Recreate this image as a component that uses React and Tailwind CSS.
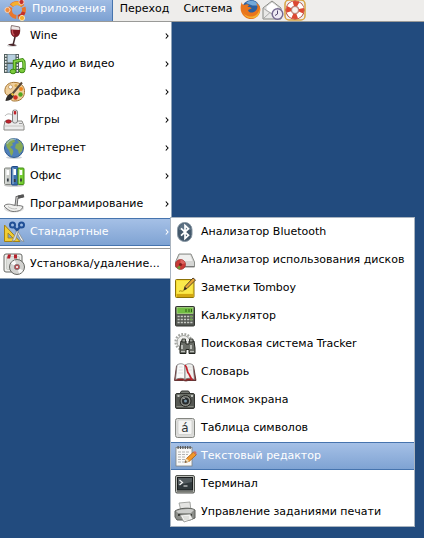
import React from "react";

function Svg({ children }) {
  return (
    <svg viewBox="0 0 24 24" className="h-6 w-6 shrink-0" fill="none" aria-hidden="true">
      {children}
    </svg>
  );
}

function Ubuntu() {
  return (
    <Svg>
      <circle cx="13" cy="10" r="7" stroke="#e8762c" strokeWidth="4" strokeDasharray="13.2 1.46" strokeDashoffset="3" />
      <path d="M8 5.300a7 7 0 0 1 10 0" stroke="#f5b02e" strokeWidth="3.500" />
      <path d="M19.700 12a7 7 0 0 1-5 4.800" stroke="#c4302b" strokeWidth="3.500" />
      <circle cx="3.500" cy="10" r="2.600" fill="#f08a3c" stroke="#f4d2b8" />
      <circle cx="17.500" cy="2" r="2.600" fill="#c4302b" stroke="#f4c9b8" />
      <circle cx="18" cy="18" r="2.600" fill="#f5b02e" stroke="#f4e2b8" />
    </Svg>
  );
}

function Wine() {
  return (
    <Svg>
      <ellipse cx="10" cy="21.500" rx="5" ry="1.200" fill="#d0d0d0" />
      <path d="M9.500 1.500 17.500 3c1 5-.500 9.500-4.300 10C9 12.500 8 7 9.500 1.500Z" fill="#eee8e8" stroke="#6b5555" strokeWidth=".8" />
      <path d="M9 5.500 18 6c.200 4-1.500 7-4.700 6.900C9.500 12.500 8.500 9.500 9 5.500Z" fill="#7d1821" />
      <path d="M10.500 6.200c-.300 2 .2 4 1.700 5.200" stroke="#c9575e" strokeWidth="1.200" />
      <path d="m13 13-1.800 7.500" stroke="#40282b" strokeWidth="1.500" />
      <path d="M6 20.500c2-1.200 6-1.200 8.500.800-2.500 1-6.500.700-8.500-.800Z" fill="#4b2529" />
    </Svg>
  );
}

function Media() {
  return (
    <Svg>
      <rect x="2" y="2" width="15" height="19" fill="#52605f" />
      <rect x="5.500" y="2.500" width="8" height="8" fill="#b7cfdf" />
      <rect x="5.500" y="12" width="8" height="8.500" fill="#8fb2cc" />
      <path d="M3.800 3v17.500M15.300 3v17.500" stroke="#f2f2f2" strokeWidth="1.500" strokeDasharray="1.700 1.300" />
      <path d="M12.500 18.500V9.500l8-1.700c1.500 1 1.500 2 1.500 4v6" stroke="#3c8a12" strokeWidth="3.400" />
      <path d="M12.500 18.500V9.500l8-1.700c1.500 1 1.500 2 1.500 4v6" stroke="#8bd548" strokeWidth="1.600" />
      <ellipse cx="11" cy="19.500" rx="2.800" ry="2.300" fill="#7ccb3c" stroke="#3c8a12" />
      <ellipse cx="20" cy="18.500" rx="2.800" ry="2.300" fill="#7ccb3c" stroke="#3c8a12" />
    </Svg>
  );
}

function Graphics() {
  return (
    <Svg>
      <path d="M3 12C2 5 8 1.500 14 2.500c6 .5 9 5 8.500 10-.500 6-5 9-11 8.500-4-.500-2-4-4-5S3.500 15 3 12Z" fill="#efcf9b" stroke="#a67634" />
      <circle cx="8.500" cy="7" r="2" fill="#fff" stroke="#a67634" strokeWidth=".6" />
      <circle cx="14" cy="5.500" r="1.600" fill="#d8a84d" />
      <circle cx="19" cy="9" r="2" fill="#f0861e" />
      <circle cx="18.500" cy="14.500" r="2.200" fill="#52a51f" />
      <circle cx="13.500" cy="17.500" r="2.200" fill="#cf2f20" />
      <path d="m20 2.500-11 13" stroke="#5a4a3a" strokeWidth="2" />
      <path d="m10 13 2 2c-1 4-4 5.500-8.500 6 .500-4 2.500-7 6.500-8Z" fill="#302d2b" />
      <path d="m9.500 13.500 2 1.800" stroke="#e8c13c" strokeWidth="2" />
    </Svg>
  );
}

function Games() {
  return (
    <Svg>
      <path d="M3 8c2-3 6-3 9 1" stroke="#b8b8b8" />
      <path d="M3 13h17l2 5v4H2v-4Z" fill="#ebebeb" stroke="#8a8a86" />
      <path d="M2.500 18h19" stroke="#c4c4c0" />
      <rect x="10.500" y="2" width="5" height="13" rx="2" fill="#e3e3e3" stroke="#858585" />
      <rect x="11.800" y="3" width="2.400" height="3.500" rx=".8" fill="#c1242c" />
      <ellipse cx="6.500" cy="13.500" rx="2.700" ry="1.700" fill="#c1242c" stroke="#7e151b" strokeWidth=".7" />
      <path d="M17 15.500h3" stroke="#999" />
    </Svg>
  );
}

function Globe() {
  return (
    <Svg>
      <ellipse cx="12" cy="21.500" rx="8" ry="1.500" fill="#ccd2d9" />
      <circle cx="12" cy="12" r="9.500" fill="#4f80ba" stroke="#345e8f" />
      <path d="M4 7c3-4 6-4.500 8-4l1 3-3 1 1 2-3 2 3 3c1 3-1 4-1 6-2-1-2-4-3-6-2-2-3-4-3-7Z" fill="#86a956" />
      <path d="m15 4 4 2 2 4-1 5-3 3-1-4-3-2 1-4 3-1Z" fill="#86a956" />
      <path d="M5 8c2-4 6-5 9-5" stroke="#b1cbe6" strokeOpacity=".6" strokeWidth="1.500" />
    </Svg>
  );
}

function Office() {
  return (
    <Svg>
      <ellipse cx="12" cy="21.500" rx="10" ry="1.300" fill="#c5c5c5" />
      <rect x="2.500" y="4" width="7" height="16.500" rx="1" fill="#c9ccc8" stroke="#80847e" />
      <rect x="9.500" y="2.500" width="6.500" height="18.500" rx="1" fill="#3c71ae" stroke="#204a87" />
      <rect x="16" y="4" width="6" height="16.500" rx="1" fill="#76cd32" stroke="#438d14" />
      <path d="M5.800 6v5M12.700 5v6M19 6v5" stroke="#fff" strokeWidth="2.600" />
      <path d="M5.800 14.500v3M12.700 15v3M19 14.500v3" stroke="#333a42" strokeWidth="1.800" />
      <path d="M4 5v14.500M11 4v16M17.300 5v14.500" stroke="#fff" strokeOpacity=".5" />
    </Svg>
  );
}

function Programming() {
  return (
    <Svg>
      <ellipse cx="12" cy="16.500" rx="10" ry="4" fill="#ddd" />
      <path d="M2 14c2-2.500 6-2 9-1 4 1 7 0 10 1.500-1 4-5 5-10 5-3 0-7-3-9-5.500Z" fill="#f0f0ee" stroke="#777" />
      <path d="m14 14 1-8.500 6-1.500" stroke="#666" strokeWidth="3" />
      <path d="m14 14 1-8.500 6-1.500" stroke="#c9c9c7" strokeWidth="1.200" />
      <path d="m16 5 6-1.300" stroke="#555" strokeWidth="3" />
      <path d="M6 14.500c2 2 6 3 9 2" stroke="#bdbdbb" />
    </Svg>
  );
}

function Accessories() {
  return (
    <Svg>
      <path d="M2.500 5v16.500H18Z" fill="#f1cd35" stroke="#a58313" />
      <path d="M6 13v5h5Z" fill="#7ea0cd" stroke="#a58313" strokeWidth=".8" />
      <path d="m13 9 2 1 7 11.500-3-1Z" fill="#f3f3f1" stroke="#80837e" strokeWidth=".7" />
      <path d="m17 9-2 1-5 11.500 3.500-1.500Z" fill="#dededb" stroke="#80837e" strokeWidth=".7" />
      <circle cx="10.500" cy="5" r="2.500" stroke="#204f96" strokeWidth="2" />
      <circle cx="19.500" cy="5" r="2.500" stroke="#204f96" strokeWidth="2" />
      <path d="m12 7 3 3 3-3" stroke="#204f96" strokeWidth="2.200" />
    </Svg>
  );
}

function Install() {
  return (
    <Svg>
      <rect x="2" y="2" width="18" height="18" rx="2" fill="#f0f0ee" stroke="#666864" />
      <rect x="4.500" y="4.500" width="13" height="13" rx="1" fill="#dedfdc" stroke="#babdb6" strokeWidth=".6" />
      <path d="M6 2.500h3l-1 4H5ZM12 2.500h3v4h-3Z" fill="#b6202b" />
      <circle cx="15" cy="15" r="7.500" fill="#d2d2d0" stroke="#666864" />
      <path d="M15 15 9 11.500a7 7 0 0 1 4-3.200ZM15 15l6 3.500a7 7 0 0 1-4 3Z" fill="#fafafa" />
      <circle cx="15" cy="15" r="2.700" fill="#b94a50" stroke="#777" strokeWidth=".7" />
      <circle cx="15" cy="15" r="1.100" fill="#fff" />
    </Svg>
  );
}

function Bluetooth() {
  return (
    <Svg>
      <rect x="4.500" y="2.500" width="14.500" height="19" rx="7.200" fill="#43586b" stroke="#8796a3" />
      <path d="M6 10c0-4 2-6.500 6-6.500s6 3 6 6.500Z" fill="#718394" fillOpacity=".6" />
      <path d="m8 8.300 7.500 7L12 18.500v-13l3.500 3.200-7.500 7" stroke="#fff" strokeWidth="1.700" />
    </Svg>
  );
}

function Disk() {
  return (
    <Svg>
      <path d="M6 6h12l3.500 8v5h-19v-5Z" fill="#d5d6d4" stroke="#8c8e8a" strokeLinejoin="round" />
      <path d="M7 7h10l2.500 6h-15Z" fill="#efefee" />
      <path d="M3 18.500h18" stroke="#777" />
      <circle cx="7.500" cy="16.500" r="5" fill="#ca3a37" stroke="#96302e" strokeWidth=".7" />
      <path d="M7.500 16.500V11.700a5 5 0 0 1 4.700 3.500Z" fill="#dc6560" />
      <path d="m7.500 16.500-3.700 3.300A5 5 0 0 0 7 21.400Z" fill="#6c9a37" />
      <circle cx="7.500" cy="16.500" r="1.600" fill="#7e1e1e" />
    </Svg>
  );
}

function Notes() {
  return (
    <Svg>
      <rect x="2.500" y="3.500" width="18.500" height="18" rx="1" fill="#f6db32" stroke="#8d7208" />
      <path d="M3.500 18h17v3h-17Z" fill="#d3a711" />
      <path d="M4 5h15.500v12.500H4Z" fill="#fbe94b" />
      <path d="M6 15.500c2-2 2 1 5-1" stroke="#a88b15" />
      <path d="m11 14 1-3.500 8-8.500 2.500 2-8.500 8.500Z" fill="#e6a537" stroke="#453723" strokeWidth=".9" />
      <path d="m11 14 1-3 2 1.500Z" fill="#332a20" />
    </Svg>
  );
}

function Calculator() {
  return (
    <Svg>
      <rect x="2.500" y="2.500" width="19" height="19.500" rx="1" fill="#555853" stroke="#333531" />
      <rect x="4" y="3.500" width="16" height="6" fill="#71bd43" stroke="#b5e08f" strokeWidth=".7" />
      <path d="M13 5v3M16 5v3M18.500 5v3" stroke="#315d17" />
      <path d="M4.500 12.500h15M4.500 15.500h15M4.500 18.500h15" stroke="#c7cac4" strokeWidth="1.700" strokeDasharray="2.200 1" />
      <path d="M17 12.500h2.500M17 15.500h2.500" stroke="#72a94b" strokeWidth="1.700" />
    </Svg>
  );
}

function Search() {
  return (
    <Svg>
      <circle cx="10.500" cy="10" r="8" stroke="#a3a5a0" strokeWidth="2.200" strokeDasharray="1.800 1.400" />
      <circle cx="10.500" cy="10" r="6.500" fill="#eeeeec" stroke="#888a85" strokeWidth=".8" />
      <path d="M8 9h5v3h3V9h5l1 7v5.500h-6v-4h-3v4H7V15Z" fill="#6a6d67" stroke="#22241f" />
      <path d="M9 7h3.500v3H9ZM16.500 7H20v3h-3.500Z" fill="#a0a39d" stroke="#22241f" strokeWidth=".8" />
      <path d="M9 13v4M18 13v4" stroke="#d3d5d1" strokeWidth="1.500" />
      <path d="M8 19.500h4M17 19.500h4" stroke="#b9bcb6" />
    </Svg>
  );
}

function Dictionary() {
  return (
    <Svg>
      <path d="m3.500 6-2 14.500h9l2.500.500 2-.500h8L20.500 6Z" fill="#9a2020" stroke="#4d2020" strokeWidth=".8" />
      <path d="M4 5c3-2 6-1.500 8 .500v14c-2.500-1.800-6-1.500-9.500 0Z" fill="#fafafa" stroke="#777" strokeWidth=".8" />
      <path d="M20 5c-3-2-6-1.500-8 .500v14c2.500-1.800 6-1.500 9.500 0Z" fill="#f0f0ee" stroke="#777" strokeWidth=".8" />
      <path d="M6 7h3.500M5.700 10h4M5.300 13H10M15 7h3.500M15 10h4" stroke="#d4d4d4" strokeWidth=".7" />
      <path d="M12 5c3 3 1 6 4 9l3 6" stroke="#c5212c" strokeWidth="1.700" />
    </Svg>
  );
}

function Camera() {
  return (
    <Svg>
      <path d="M7 5.500 8.500 3h7L17 5.500Z" fill="#777a74" stroke="#333531" />
      <rect x="2.500" y="5.500" width="19" height="15" rx="1.500" fill="#555853" stroke="#333531" />
      <path d="M3.500 7h17M3.500 18.500h17" stroke="#85887f" />
      <circle cx="12.500" cy="13" r="5.500" fill="#888b85" stroke="#252622" />
      <circle cx="12.500" cy="13" r="3.500" fill="#272b2c" />
      <circle cx="12.500" cy="13" r="1.500" fill="#7996a9" />
      <path d="m10.500 11 1-1" stroke="#fff" />
      <path d="M4.500 8h2M18 8h2" stroke="#e1e3df" strokeWidth="1.500" />
    </Svg>
  );
}

function Characters() {
  return (
    <Svg>
      <rect x="2.500" y="2.500" width="19" height="19" rx="2" fill="#dcdcda" stroke="#858782" />
      <rect x="5" y="4" width="14" height="14.500" rx="1.500" fill="#f4f4f3" stroke="#c8cac5" strokeWidth=".7" />
      <text x="12" y="16" textAnchor="middle" fontFamily="DejaVu Sans" fontSize="12" fill="#2e3436">á</text>
    </Svg>
  );
}

function Editor() {
  return (
    <Svg>
      <rect x="3" y="3.500" width="16" height="18.500" fill="#f9f9f8" stroke="#81837f" strokeWidth=".8" />
      <path d="M4.500 3.500h14" stroke="#555" strokeWidth="3" strokeDasharray="1.200 1.200" />
      <path d="M5 8h11M5 10.500h10M5 13h8M5 15.500h8M5 18h7" stroke="#aaa" strokeWidth=".9" strokeDasharray="3 1" />
      <path d="m12 18.500 1.500-4 7-6.500 2.800 2.800-7 6.500Z" fill="#f1982b" stroke="#a75a0b" strokeWidth=".8" />
      <path d="m20.500 8 1-.800c1.300-.200 2.400 1 2 2.400l-.700.900Z" fill="#d56b63" />
      <path d="m12 18.500 1.500-4 2.800 2.800Z" fill="#f1dfb8" />
      <path d="m12 18.500.700-1.800 1.200 1.200Z" fill="#333" />
    </Svg>
  );
}

function Terminal() {
  return (
    <Svg>
      <rect x="2.500" y="3.500" width="19" height="17.500" rx="1.500" fill="#b9bbb6" stroke="#50534e" />
      <rect x="4.500" y="5.500" width="15" height="12.500" fill="#30383b" stroke="#191c1d" />
      <path d="M5 6h14v4L5 13Z" fill="#6a7376" fillOpacity=".6" />
      <path d="m6.500 8 3 2.500-3 2.500M10.500 14h4" stroke="#f4f4f4" strokeWidth="1.200" />
      <path d="M4 19.500h16" stroke="#777a74" />
    </Svg>
  );
}

function Printer() {
  return (
    <Svg>
      <path d="m6 3 11-1 1 9H8Z" fill="#e4e4e2" stroke="#929490" strokeWidth=".8" />
      <path d="M2 11c4-3 16-4 20-1v8l-5 2H4l-2-3Z" fill="#8c8e8a" stroke="#5c5e5a" />
      <path d="M3 11c5-2 14-3 18-1l-3 3H5Z" fill="#cbccca" />
      <path d="M5 15h14" stroke="#3b3d39" strokeWidth="2" />
      <path d="m7 15 10-1 3 5-9 3Z" fill="#f1f1ef" stroke="#90928e" strokeWidth=".8" />
      <path d="M10 17h6M11 19h5" stroke="#babcb8" strokeWidth=".7" />
    </Svg>
  );
}

function Firefox() {
  return (
    <Svg>
      <circle cx="12" cy="9" r="9" fill="#2d609f" />
      <path d="M7 3c4-4 11-2 13 3-4-1-6 0-8-1Z" fill="#73a9d9" />
      <path d="M3 2c0 2 0 2 2 3 2-1 4-1 5 0L8.500 7c3 0 4 .500 4 1.500L9 10c1 4 7 3 9-1 1-2 0-5-1-6 4 2 5 5 4 9-2 7-10 9-15 5C.5 13 1 6 3 2Z" fill="#e9761d" />
      <path d="M3 8c0 7 7 10 12 8 3-1 5-4 5.500-7 2 8-8 12-14 7-2-2-3.500-5-3.500-8Z" fill="#f5b332" />
    </Svg>
  );
}

function Mail() {
  return (
    <Svg>
      <path d="m2 8 9-7 9 7v11H2Z" fill="#e9e9e7" stroke="#858782" />
      <path d="M5 6.500 11 2l6 4.500v4l-6 3-6-3Z" fill="#fff" stroke="#c0c0be" strokeWidth=".7" />
      <path d="m2 8 9 6 9-6M2.500 18.500 9 12.500" stroke="#aaa" />
      <circle cx="16.500" cy="14" r="5.300" fill="#eeeaf3" stroke="#766b91" strokeWidth="1.500" />
      <path d="M16.500 10.500V14l-2.500 1.500" stroke="#51466f" />
    </Svg>
  );
}

function Help() {
  return (
    <Svg>
      <rect x="2" y="0" width="20" height="20" rx="4" stroke="#d9a441" strokeWidth="1.500" />
      <circle cx="12" cy="10" r="6.500" stroke="#ab3425" strokeWidth="6" />
      <circle cx="12" cy="10" r="6.500" stroke="#fff" strokeWidth="4.800" />
      <circle cx="12" cy="10" r="6.500" stroke="#dc4932" strokeWidth="5" strokeDasharray="5.100 5.110" strokeDashoffset="2.550" />
      <circle cx="12" cy="10" r="3.500" fill="#f7f3ef" stroke="#a96754" strokeWidth=".7" />
    </Svg>
  );
}

function Chevron() {
  return (
    <svg viewBox="0 0 4 6" className="h-[6px] w-1 shrink-0" fill="none" aria-hidden="true">
      <path d="m.8.500 2.200 2.500L.8 5.500" stroke="currentColor" strokeWidth="1.100" />
    </svg>
  );
}

const categories = [
  ["Wine", Wine],
  ["Аудио и видео", Media],
  ["Графика", Graphics],
  ["Игры", Games],
  ["Интернет", Globe],
  ["Офис", Office],
  ["Программирование", Programming],
];

const accessories = [
  ["Анализатор Bluetooth", Bluetooth],
  ["Анализатор использования дисков", Disk],
  ["Заметки Tomboy", Notes],
  ["Калькулятор", Calculator],
  ["Поисковая система Tracker", Search],
  ["Словарь", Dictionary],
  ["Снимок экрана", Camera],
  ["Таблица символов", Characters],
  ["Текстовый редактор", Editor],
  ["Терминал", Terminal],
  ["Управление заданиями печати", Printer],
];

const launchers = [
  ["Firefox", Firefox],
  ["Evolution", Mail],
  ["Справка", Help],
];

const ACTIVE = "border-y border-[#4674ae] bg-linear-to-b from-[#a5c0e6] to-[#7fa3d3] text-white";

function MenuItem({ label, icon: Icon, active = false, arrow = false }) {
  return (
    <button
      type="button"
      role="menuitem"
      aria-haspopup={arrow ? "menu" : undefined}
      className={`flex h-7 w-full items-center gap-1 px-[2px] text-left whitespace-nowrap ${active ? ACTIVE : ""}`}
    >
      <Icon />
      <span className="grow">{label}</span>
      {arrow && <Chevron />}
    </button>
  );
}

export default function App() {
  return (
    <div className="min-h-screen overflow-hidden bg-[#224b7e] font-['DejaVu_Sans','Liberation_Sans',sans-serif] text-[11px] leading-4 text-black">
      <header className="flex h-[22px] items-start border-b border-[#9a9a98] bg-[#eeedeb]">
        <nav className="flex h-full leading-[18px]">
          <button type="button" className="flex h-full items-start gap-1 border-r border-[#4674ae] bg-linear-to-b from-[#9fbce4] to-[#7da1d2] pr-[6px] pl-1 text-white">
            <Ubuntu />
            <span>Приложения</span>
          </button>
          <button type="button" className="flex items-start px-[7px]">Переход</button>
          <button type="button" className="flex items-start px-[7px]">Система</button>
        </nav>
        <div className="flex">
          {launchers.map(([name, Icon]) => (
            <button key={name} type="button" aria-label={name} className="flex w-[22px] justify-center">
              <Icon />
            </button>
          ))}
        </div>
      </header>

      <ul role="menu" className="w-[172px] border-r border-b border-[#8fa3b8] bg-white">
        {categories.map(([label, icon]) => (
          <li key={label} role="none">
            <MenuItem label={label} icon={icon} arrow />
          </li>
        ))}
        <li role="none" className="relative">
          <MenuItem label="Стандартные" icon={Accessories} arrow active />
          <ul role="menu" className="absolute -top-px left-full -ml-px w-[245px] border border-[#a9b4c0] bg-white">
            {accessories.map(([label, icon]) => (
              <li key={label} role="none">
                <MenuItem label={label} icon={icon} active={label === "Текстовый редактор"} />
              </li>
            ))}
          </ul>
        </li>
        <li role="separator" className="mt-[2px] mb-px border-t border-[#9a9a98]" />
        <li role="none">
          <MenuItem label="Установка/удаление..." icon={Install} />
        </li>
      </ul>
    </div>
  );
}
